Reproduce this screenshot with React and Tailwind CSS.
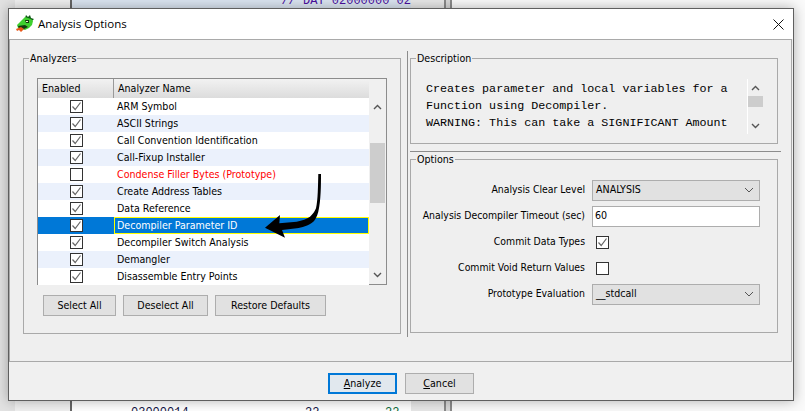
import React from "react";

const ui = "font-['DejaVu_Sans_Condensed','DejaVu_Sans',sans-serif]";

const rows = [
  { name: "ARM Symbol", on: true },
  { name: "ASCII Strings", on: true },
  { name: "Call Convention Identification", on: true },
  { name: "Call-Fixup Installer", on: true },
  { name: "Condense Filler Bytes (Prototype)", on: false, red: true },
  { name: "Create Address Tables", on: true },
  { name: "Data Reference", on: true },
  { name: "Decompiler Parameter ID", on: true, selected: true },
  { name: "Decompiler Switch Analysis", on: true },
  { name: "Demangler", on: true },
  { name: "Disassemble Entry Points", on: true },
];

const Check = ({ on }) => (
  <span className="flex h-[13px] w-[13px] shrink-0 items-center justify-center border border-[#333333] bg-white">
    {on && (
      <svg width="11" height="11" viewBox="0 0 11 11" fill="none">
        <path d="M1.5 5.5 L4.2 8.5 L9.5 1.5" stroke="#666666" strokeWidth="1.2" />
      </svg>
    )}
  </span>
);

const Chevron = ({ up }) => (
  <svg width="9" height="6" viewBox="0 0 9 6" fill="none">
    <path d={up ? "M1 5 L4.5 1.5 L8 5" : "M1 1 L4.5 4.5 L8 1"} stroke="#555555" strokeWidth="1.4" />
  </svg>
);

const Group = ({ title, className, children }) => (
  <fieldset className={`min-w-0 border border-[#a9a9a9] ${className}`}>
    <legend className="ml-[5px] px-[1px] text-[10.6px] leading-[14px] text-black">{title}</legend>
    {children}
  </fieldset>
);

const Btn = ({ className, focused, children }) => (
  <button className={`flex h-[21px] items-center justify-center pt-[1px] text-[10.6px] text-black ${focused ? "border-2 border-[#0078d7] bg-[#e1e8ee]" : "border border-[#adadad] bg-[#e1e1e1]"} ${className}`}>
    {children}
  </button>
);

const Combo = ({ value }) => (
  <div className="flex h-[21px] w-[168px] items-center justify-between border border-[#adadad] bg-[#e1e1e1] pl-[3px] pr-[4px] text-[10.6px] text-black">
    <span>{value}</span>
    <svg width="10" height="6" viewBox="0 0 10 6" fill="none" className="mr-[1px]">
      <path d="M1 1 L5 5 L9 1" stroke="#555555" />
    </svg>
  </div>
);

const Dragon = () => (
  <svg width="18" height="18" viewBox="0 0 18 18" className="shrink-0">
    <path d="M9 3 L10 0 L12 2 L14 0 L15 3 L18 4 L16 6 Z" fill="#0e5a14" />
    <path d="M1 10 L5 6 L9 2 L12 3 L15 4 L17 6 L16 10 L13 13 L9 15 L5 14 L2 13 Z" fill="#3ecf2e" />
    <path d="M2 11 L9 10 L12 12 L8 14 L3 13 Z" fill="#12380f" />
    <path d="M0 14 L5 12 L8 14 L5 17 L3 15 L1 16 Z" fill="#e8591c" />
    <path d="M9 5 L13 5 L13 8 L10 8 Z" fill="#12380f" />
    <path d="M10 6 L12 6 L12 7 L10 7 Z" fill="#f4f7c8" />
  </svg>
);

const Row = ({ label, children }) => (
  <div className="flex h-[26px] items-center">
    <span className="w-[172px] text-right text-[10.4px] whitespace-nowrap text-black">{label}</span>
    <div className="ml-[7px]">{children}</div>
  </div>
);

export default function App() {
  return (
    <div className={`relative h-[411px] w-[805px] overflow-hidden bg-white ${ui}`}>
      {/* app behind the dialog */}
      <div className="flex h-full">
        <div className="w-[15px] bg-[#e2e2e2]" />
        <div className="w-[57px] border-r-2 border-[#666666] bg-[#f0f0f0]" />
        <div className="relative w-[339px] bg-white">
          <div className="h-[8px] bg-[#dbe5f1]" />
          <div className="absolute top-[-8px] right-[0px] font-['Liberation_Mono',monospace] text-[12px] whitespace-nowrap text-[#4b0f9e]">// DAT 02000000 02</div>
          <div className="absolute top-[404px] left-[59px] flex font-['Liberation_Mono',monospace] text-[12px] text-[#111144]">
            <span className="w-[174px]">03000014</span>
            <span className="w-[80px]">22</span>
            <span className="text-[#0b6b3a]">22</span>
          </div>
        </div>
        <div className="w-[33px] bg-[#e8e8e8]" />
        <div className="w-[8px] border-x-2 border-[#8a8a8a] bg-[#d8d8d8]" />
        <div className="flex-1 bg-[#fafafa]" />
      </div>

      {/* dialog */}
      <div className="absolute top-[8px] left-[8px] flex h-[393px] w-[786px] flex-col border border-[#5f5f5f] bg-[#f0f0f0] shadow-[0_0_12px_rgba(0,0,0,0.3)]">
        <div className="flex h-[30px] shrink-0 items-center justify-between bg-white pl-[7px] pr-[9px]">
          <div className="flex items-center gap-[4px]">
            <Dragon />
            <span className="font-['Open_Sans',sans-serif] text-[11.5px] text-black">Analysis Options</span>
          </div>
          <svg width="11" height="11" viewBox="0 0 11 11" fill="none">
            <path d="M0.5 0.5 L10.5 10.5 M10.5 0.5 L0.5 10.5" stroke="#111111" />
          </svg>
        </div>

        <div className="mr-[1px] flex h-[323px] shrink-0 border border-[#a9a9a9] bg-[#efefef] pt-[11px] pl-[13px] pr-[13px]">
          {/* analyzers */}
          <Group title="Analyzers" className="h-[283px] w-[378px] shrink-0">
            <div className="px-[13px] pt-[13px]">
              <div className="flex h-[207px] w-[350px] border border-[#8c8c8c] bg-white">
                <div className="w-[331px]">
                  <div className="flex h-[19px] bg-gradient-to-b from-[#f2f2f2] to-[#dcdcdc] text-[10.6px] leading-[19px] text-black">
                    <span className="w-[76px] border-r border-[#999999] pl-[4px]">Enabled</span>
                    <span className="pl-[4px]">Analyzer Name</span>
                  </div>
                  {rows.map((r, i) => (
                    <div key={r.name} className={`flex h-[17px] items-center text-[10.6px] ${r.selected ? "bg-[#0078d7] text-white" : i % 2 ? "bg-[#ebf1fc] text-black" : "bg-white text-black"}`}>
                      <span className="flex w-[76px] justify-center"><Check on={r.on} /></span>
                      <span className={`flex h-full flex-1 items-center pt-[1px] ${r.selected ? "border border-[#ffff00] pl-[2px]" : "pl-[3px]"} ${r.red ? "text-[#ff0000]" : ""}`}>{r.name}</span>
                    </div>
                  ))}
                </div>
                <div className="flex w-[17px] flex-col items-center bg-[#f0f0f0]">
                  <div className="flex h-[31px] items-end"><Chevron up /></div>
                  <div className="mt-[33px] h-[60px] w-[15px] bg-[#cdcdcd]" />
                  <div className="mt-auto pb-[6px]"><Chevron /></div>
                </div>
              </div>
              <div className="mt-[10px] flex gap-[7px] pl-[6px]">
                <Btn className="w-[73px]">Select All</Btn>
                <Btn className="w-[85px]">Deselect All</Btn>
                <Btn className="w-[111px]">Restore Defaults</Btn>
              </div>
            </div>
          </Group>

          {/* divider */}
          <div className="ml-[6px] mr-[2px] h-[286px] w-px shrink-0 bg-[#8c8c8c]" />

          {/* right side */}
          <div className="flex w-[368px] shrink-0 flex-col">
            <Group title="Description" className="h-[93px] w-[368px]">
              <div className="flex h-full items-start pl-[15px] pt-[14px]">
                <div className="mt-[2px] w-[321px] font-['Liberation_Mono',monospace] text-[11.7px] leading-[17px] whitespace-pre text-black">
                  {"Creates parameter and local variables for a\nFunction using Decompiler.\nWARNING: This can take a SIGNIFICANT Amount"}
                </div>
                <div className="flex h-[55px] w-[16px] flex-col items-center border-l border-white pt-[6px]">
                  <Chevron up />
                  <div className="mt-[5px] h-[11px] w-[15px] bg-[#cdcdcd]" />
                  <div className="mt-auto pb-[5px]"><Chevron /></div>
                </div>
              </div>
            </Group>
            <div className="mt-[7px] h-px w-[371px] bg-[#8c8c8c]" />
            <Group title="Options" className="h-[181px] w-[368px]">
              <div className="pt-[11px] pl-[2px]">
                <Row label="Analysis Clear Level"><Combo value="ANALYSIS" /></Row>
                <Row label="Analysis Decompiler Timeout (sec)">
                  <div className="flex h-[21px] w-[168px] items-center border border-[#adadad] bg-white pl-[2px] text-[10.6px] text-black">60</div>
                </Row>
                <Row label="Commit Data Types"><span className="ml-[4px] block"><Check on /></span></Row>
                <Row label="Commit Void Return Values"><span className="ml-[4px] block"><Check /></span></Row>
                <Row label="Prototype Evaluation"><Combo value="__stdcall" /></Row>
              </div>
            </Group>
          </div>
        </div>

        <div className="flex flex-1 items-start justify-end gap-[8px] pt-[11px] pr-[319px]">
          <Btn focused className="w-[69px]"><span><u>A</u>nalyze</span></Btn>
          <Btn className="w-[69px]"><span><u>C</u>ancel</span></Btn>
        </div>
      </div>

      {/* hand drawn arrow over the table */}
      <svg className="absolute top-0 left-0" width="805" height="411" fill="none">
        <path d="M318.3 174 L321 174 C321 185 321 200 318.3 211.7 C317 217 315 220 313.3 221.7 C308 226 302 227.5 296.7 228.3 L282 230 L285 237.7 L265 227.7 L280 215 L279.3 223.3 L296.7 221.7 C302 220.5 307 219 310 216.7 C313 214 315 211 316 208.3 C318 200 318 185 318.3 174 Z" fill="#000000" />
      </svg>
    </div>
  );
}
